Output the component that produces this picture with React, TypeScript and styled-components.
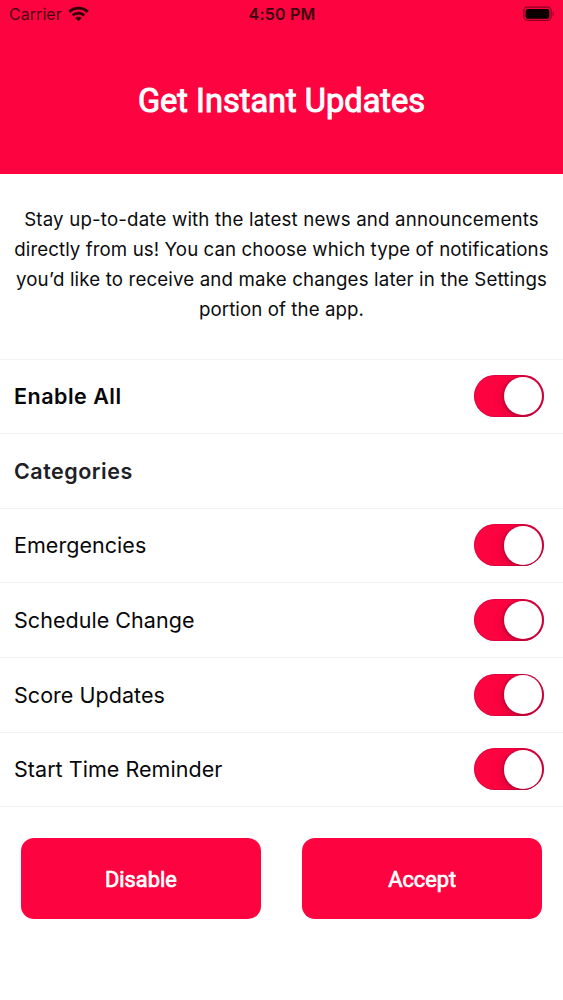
import React, { useState } from 'react';
import styled, { createGlobalStyle } from 'styled-components';

const RED = '#fd0340';

const GlobalStyle = createGlobalStyle`
  * { box-sizing: border-box; }
  body {
    margin: 0;
    background: #fff;
    color: #0c0c0e;
    font-family: Inter, 'Liberation Sans', sans-serif;
  }
`;

const Screen = styled.main`
  display: flex;
  flex-direction: column;
  min-height: 1000px;
  background: #fff;
`;

const Header = styled.header`
  height: 174px;
  background: ${RED};
`;

const StatusBar = styled.div`
  display: grid;
  grid-template-columns: 1fr auto 1fr;
  align-items: center;
  height: 28px;
  padding: 0 8px 0 9px;
  color: #4a0012;
  font-size: 16px;
  line-height: 28px;
`;

const Carrier = styled.div`
  display: flex;
  align-items: center;
  gap: 6px;
  letter-spacing: 0.05px;
`;

const Clock = styled.div`
  color: #3a000e;
  font-weight: 600;
  letter-spacing: 0.2px;
`;

const Battery = styled.div`
  display: flex;
  justify-content: flex-end;
`;

const Title = styled.h1`
  margin: 48px 0 0;
  color: #fff;
  font: 400 32.6px/50px Roboto, sans-serif;
  text-align: center;
  -webkit-text-stroke: 1px #fff;
`;

const Intro = styled.p`
  margin: 0;
  height: 184.5px;
  padding-top: 31px;
  font-size: 18.7px;
  line-height: 30px;
  text-align: center;
  white-space: nowrap;
`;

const IntroLine = styled.span<{ $tracking?: number }>`
  display: block;
  letter-spacing: ${(p) => p.$tracking ?? 0.08}px;
`;

const List = styled.section`
  border-top: 1px solid #f3f3f3;
`;

const Row = styled.div`
  display: flex;
  align-items: center;
  justify-content: space-between;
  height: 74.67px;
  padding: 0 19px 0.6px 14px;
  border-bottom: 1px solid #f3f3f3;
`;

const Label = styled.span<{ $bold?: boolean; $soft?: boolean }>`
  font-size: 21.5px;
  line-height: 30px;
  font-weight: ${(p) => (p.$bold ? 600 : 400)};
  letter-spacing: ${(p) => (p.$bold ? 0.5 : 0.04)}px;
  color: ${(p) => (p.$soft ? '#202024' : '#070709')};
`;

const Toggle = styled.button<{ $on: boolean }>`
  display: flex;
  align-items: center;
  justify-content: ${(p) => (p.$on ? 'flex-end' : 'flex-start')};
  width: 70px;
  height: 42px;
  padding: 2px;
  border: 0;
  border-radius: 21px;
  background: ${(p) => (p.$on ? RED : '#e5e5ea')};
  box-shadow: inset 0 0 0 1px rgba(190, 0, 60, 0.45);
  overflow: hidden;
`;

const Knob = styled.span`
  width: 38.5px;
  height: 38.5px;
  border-radius: 50%;
  background: #fff;
  box-shadow: 0 0 2px 1px rgba(130, 0, 50, 0.4), -1px 3px 9px rgba(110, 0, 40, 0.35);
`;

const Actions = styled.div`
  display: grid;
  grid-template-columns: 1fr 1fr;
  gap: 41px;
  padding: 31px 20.7px 0;
`;

const Action = styled.button`
  height: 81px;
  padding: 2px 0 0;
  border: 0;
  border-radius: 13px;
  background: ${RED};
  color: #fff;
  font: 400 21.8px/30px Roboto, sans-serif;
  -webkit-text-stroke: 0.7px #fff;
`;

const WifiIcon = () => (
  <svg width="21" height="16" viewBox="0 0 21 16">
    <g fill="none" stroke="#300008" strokeWidth="2.9">
      <path d="M1.2 5.9C6.4 .9 14.6 .9 19.8 5.9" />
      <path d="M4.6 9.4C8 6.3 13 6.3 16.4 9.4" />
    </g>
    <path fill="#300008" d="M10.5 15.2 7.2 12c1.8-1.6 4.8-1.6 6.6 0Z" />
  </svg>
);

const BatteryIcon = () => (
  <svg width="32" height="16" viewBox="0 0 32 16">
    <rect x=".8" y="1.2" width="27.4" height="13.2" rx="3.6" fill="none" stroke="#8a0022" strokeWidth="1.2" />
    <rect x="2.6" y="3" width="23.8" height="9.8" rx="2" fill="#0c0002" />
    <path d="M29.6 5.6c1.9.7 1.9 3.8 0 4.5Z" fill="#a3002a" />
  </svg>
);

const CATEGORIES = ['Emergencies', 'Schedule Change', 'Score Updates', 'Start Time Reminder'];

type SwitchProps = { label: string; on: boolean; onToggle: () => void };

const Switch = ({ label, on, onToggle }: SwitchProps) => (
  <Toggle type="button" role="switch" aria-label={label} aria-checked={on} $on={on} onClick={onToggle}>
    <Knob />
  </Toggle>
);

export default function App() {
  const [enabled, setEnabled] = useState(CATEGORIES.map(() => true));
  const all = enabled.every(Boolean);

  return (
    <Screen>
      <GlobalStyle />
      <Header>
        <StatusBar>
          <Carrier>
            Carrier
            <WifiIcon />
          </Carrier>
          <Clock>4:50 PM</Clock>
          <Battery>
            <BatteryIcon />
          </Battery>
        </StatusBar>
        <Title>Get Instant Updates</Title>
      </Header>
      <Intro>
        <IntroLine $tracking={0.17}>Stay up-to-date with the latest news and announcements</IntroLine>
        <IntroLine>directly from us! You can choose which type of notifications</IntroLine>
        <IntroLine $tracking={0.15}>you’d like to receive and make changes later in the Settings</IntroLine>
        <IntroLine>portion of the app.</IntroLine>
      </Intro>
      <List>
        <Row>
          <Label $bold>Enable All</Label>
          <Switch label="Enable All" on={all} onToggle={() => setEnabled(CATEGORIES.map(() => !all))} />
        </Row>
        <Row>
          <Label $bold $soft>
            Categories
          </Label>
        </Row>
        {CATEGORIES.map((name, i) => (
          <Row key={name}>
            <Label>{name}</Label>
            <Switch
              label={name}
              on={enabled[i]}
              onToggle={() => setEnabled(enabled.map((v, j) => (j === i ? !v : v)))}
            />
          </Row>
        ))}
      </List>
      <Actions>
        <Action type="button">Disable</Action>
        <Action type="button">Accept</Action>
      </Actions>
    </Screen>
  );
}
